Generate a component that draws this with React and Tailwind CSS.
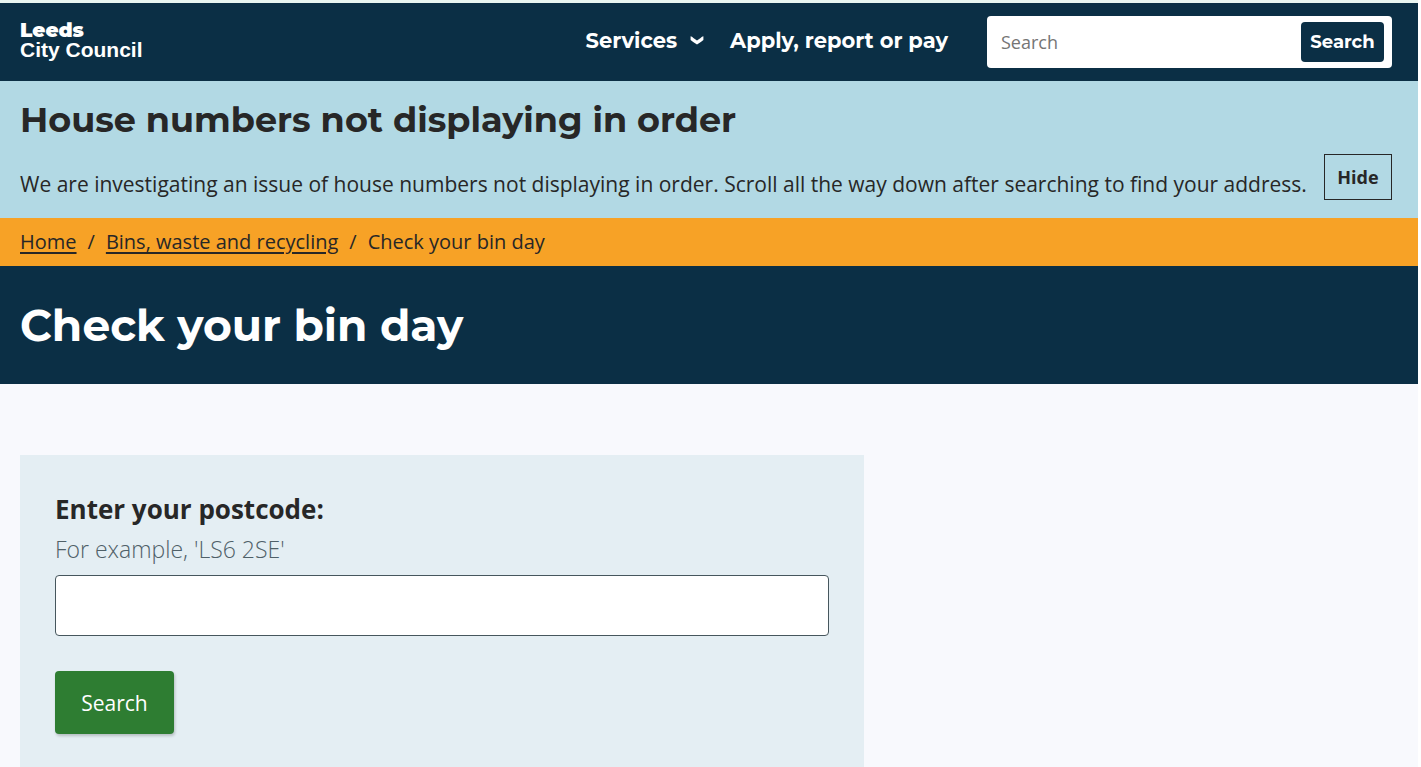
import React from 'react';

function Header() {
  return (
    <header className="flex items-center justify-between border-t-3 border-[#eaf6f1] bg-[#0b2f45] pl-5 pr-[26px] text-white">
      <a href="#" className="flex flex-col pb-1">
        <span className="text-[20px] leading-[19px] font-black">Leeds</span>
        <span className="font-['Liberation_Sans',sans-serif] text-[21px] leading-[19px] font-bold">City Council</span>
      </a>

      <div className="flex items-center py-[13px]">
        <nav className="mr-[39px] flex items-center gap-[26px] pb-0.5 text-[21px] leading-6 font-bold">
          <button type="button" className="flex items-center gap-[13px]">
            Services
            <svg className="h-2.5 w-3.5" viewBox="0 0 14 10" fill="currentColor">
              <path d="M0.6 0.2Q2 0.2 3.4 2L7 4.6L10.6 2Q12 0.2 13.4 0.2V4Q10.5 6.6 7 8.4Q3.5 6.6 0.6 4Z" />
            </svg>
          </button>
          <a href="#">Apply, report or pay</a>
        </nav>

        <form className="flex h-[52px] w-[405px] items-center rounded bg-white pr-2" onSubmit={(e) => e.preventDefault()}>
          <input
            type="search"
            aria-label="Search this site"
            placeholder="Search"
            className="min-w-0 flex-1 px-3.5 font-['Open_Sans',sans-serif] text-lg text-[#272727] outline-none placeholder:text-[#757575]"
          />
          <button type="submit" className="h-10 w-[83px] rounded bg-[#0b2f45] text-lg font-bold">
            Search
          </button>
        </form>
      </div>
    </header>
  );
}

function Notice() {
  return (
    <section className="flex items-end justify-between bg-[#b2d9e4] pt-[18px] pr-[26px] pb-[18px] pl-5">
      <div>
        <h2 className="mb-7 text-[35px] leading-[42px] font-bold">House numbers not displaying in order</h2>
        <p className="font-['Open_Sans',sans-serif] text-[21px] leading-[31px]">
          We are investigating an issue of house numbers not displaying in order. Scroll all the way down after searching to find your address.
        </p>
      </div>
      <button type="button" className="h-[46px] w-[68px] shrink-0 border border-[#272727] font-['Open_Sans',sans-serif] text-lg font-bold">
        Hide
      </button>
    </section>
  );
}

function Breadcrumbs() {
  return (
    <nav aria-label="Breadcrumb" className="flex h-12 items-center gap-[11px] bg-[#f7a226] px-5 font-['Open_Sans',sans-serif] text-xl">
      <a href="#" className="underline decoration-2 underline-offset-3">Home</a>
      <span>/</span>
      <a href="#" className="underline decoration-2 underline-offset-3">Bins, waste and recycling</a>
      <span>/</span>
      <span aria-current="page">Check your bin day</span>
    </nav>
  );
}

function PostcodeForm() {
  return (
    <form
      className="w-[844px] max-w-full bg-[#e4eef3] px-[35px] pt-[34px] pb-8 font-['Open_Sans',sans-serif]"
      onSubmit={(e) => e.preventDefault()}
    >
      <label htmlFor="postcode" className="block text-[26px] leading-10 font-bold">
        Enter your postcode:
      </label>
      <p id="postcode-hint" className="text-[23px] leading-10 font-light text-[#4f6068]">
        For example, 'LS6 2SE'
      </p>
      <input
        id="postcode"
        type="text"
        aria-describedby="postcode-hint"
        className="mt-1.5 block h-[61px] w-full rounded border border-[#46565d] bg-white px-4 text-2xl"
      />
      <button type="submit" className="mt-[35px] h-[63px] w-[119px] rounded bg-[#2e7d32] pt-0.5 text-[21px] text-white shadow-[1px_2px_3px_rgba(0,0,0,0.2)]">
        Search
      </button>
    </form>
  );
}

export default function App() {
  return (
    <div className="flex min-h-screen flex-col border-r-3 border-white bg-[#f8f9fd] font-['Montserrat','Inter',sans-serif] text-[#272727]">
      <Header />
      <Notice />
      <Breadcrumbs />
      <div className="bg-[#0b2f45] px-5 py-[31px] text-white">
        <h1 className="text-[44px] leading-[56px] font-bold">Check your bin day</h1>
      </div>
      <main className="flex flex-1 px-5 pt-[71px]">
        <PostcodeForm />
      </main>
    </div>
  );
}
